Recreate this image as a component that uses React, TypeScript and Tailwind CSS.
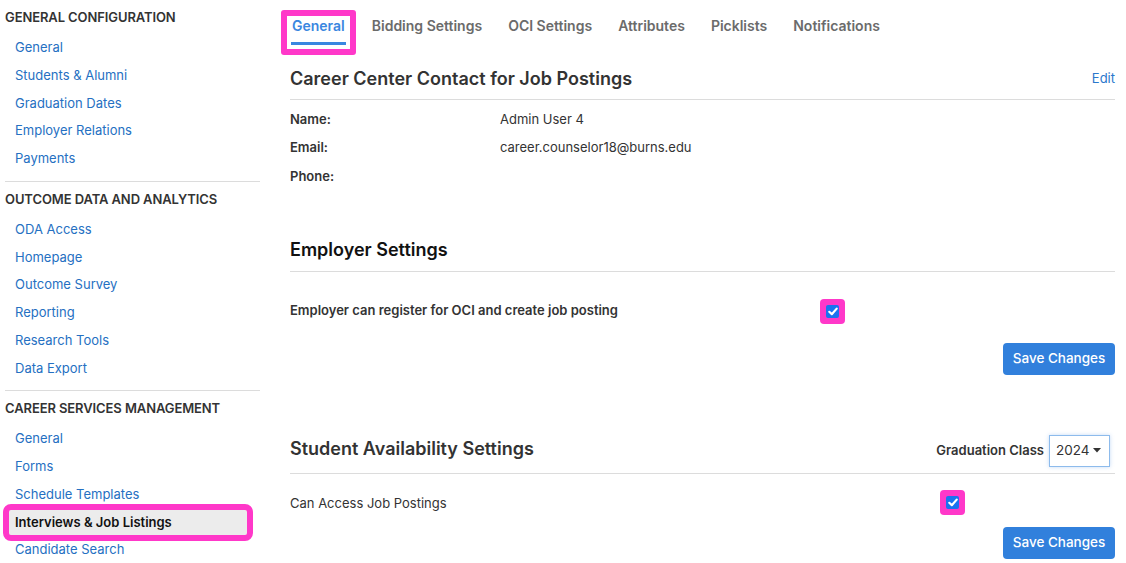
import React from "react";

const font = { fontFamily: "Inter, 'Noto Sans', 'Liberation Sans', sans-serif" };

type Section = { title: string; links: string[]; active?: string };

const sections: Section[] = [
  {
    title: "GENERAL CONFIGURATION",
    links: ["General", "Students & Alumni", "Graduation Dates", "Employer Relations", "Payments"],
  },
  {
    title: "OUTCOME DATA AND ANALYTICS",
    links: ["ODA Access", "Homepage", "Outcome Survey", "Reporting", "Research Tools", "Data Export"],
  },
  {
    title: "CAREER SERVICES MANAGEMENT",
    links: ["General", "Forms", "Schedule Templates", "Interviews & Job Listings", "Candidate Search"],
    active: "Interviews & Job Listings",
  },
];

function Check() {
  return (
    <div className="rounded-[4px] bg-[#ff38c9] p-[6px]">
      <div className="flex h-[13px] w-[13px] items-center justify-center rounded-[2px] bg-[#1a73f0]">
        <svg width="10" height="9" viewBox="0 0 10 9">
          <path d="M1.3 4.8 L3.8 7.2 L8.7 1.6" stroke="white" strokeWidth="2.2" fill="none" strokeLinecap="round" strokeLinejoin="round" />
        </svg>
      </div>
    </div>
  );
}

function SaveButton() {
  return (
    <div className="flex justify-end">
      <button className="h-8 w-[112px] rounded-[4px] bg-[#3180dc] text-[13.5px] font-medium text-white">
        Save Changes
      </button>
    </div>
  );
}

export default function App() {
  return (
    <div className="flex h-[563px] w-[1126px] overflow-hidden bg-white text-[#333]" style={font}>
      {/* Sidebar */}
      <aside className="ml-[5px] w-[255px] shrink-0 pt-[7px]">
        {sections.map((s, i) => (
          <div key={s.title} className={i > 0 ? "mt-[8px] border-t border-[#dcdcdc] pt-[7px]" : ""}>
            <div className="h-5 text-[13px] font-semibold leading-5 tracking-[-0.1px] text-[#333]">{s.title}</div>
            <ul className="mt-[7px]">
              {s.links.map((l) =>
                l === s.active ? (
                  <li key={l} className="flex h-[27.75px] items-center">
                    <div className="ml-[4px] flex h-[25px] w-[238px] items-center rounded-[2px] bg-[#ececec] pl-[6px] text-[13px] font-semibold text-[#111] outline-[6px] outline-[#ff38c9] outline-solid">
                      {l}
                    </div>
                  </li>
                ) : (
                  <li key={l} className="flex h-[27.75px] items-center pl-[10px] text-[13px] text-[#2570c2]">
                    {l}
                  </li>
                )
              )}
            </ul>
          </div>
        ))}
      </aside>

      {/* Main */}
      <main className="ml-[30px] w-[825px] shrink-0">
        {/* Tabs */}
        <nav className="flex gap-[26px] pt-[16px] text-[14px] font-semibold">
          <div className="relative ml-[1px]">
            <div className="absolute -left-[10px] -right-[10px] -top-[6px] h-[45px] rounded-[3px] border-[6px] border-[#ff38c9]" />
            <div className="relative px-[1px] pb-[6px] leading-5 text-[#3a87e0]">General</div>
            <div className="relative h-[3px] w-full bg-[#3a87e0]" />
          </div>
          {["Bidding Settings", "OCI Settings", "Attributes", "Picklists", "Notifications"].map((t) => (
            <div key={t} className="leading-5 text-[#6b6b6b]">
              {t}
            </div>
          ))}
        </nav>

        {/* Contact */}
        <div className="mt-[22px] flex items-center justify-between border-b border-[#dcdcdc] pb-[8px]">
          <h2 className="text-[18px] font-semibold leading-6 text-[#333]">Career Center Contact for Job Postings</h2>
          <a className="text-[13px] text-[#2a78cc]">Edit</a>
        </div>
        <div className="mt-[5px] text-[13px]">
          {[
            ["Name:", "Admin User 4"],
            ["Email:", "career.counselor18@burns.edu"],
            ["Phone:", ""],
          ].map(([k, v]) => (
            <div key={k} className="flex h-[28.5px] items-center">
              <div className="w-[210px] font-semibold text-[#333]">{k}</div>
              <div className="text-[#333]">{v}</div>
            </div>
          ))}
        </div>

        {/* Employer settings */}
        <div className="mt-[47px] border-b border-[#dcdcdc] pb-[9px]">
          <h2 className="text-[18px] font-semibold leading-6 text-[#111]">Employer Settings</h2>
        </div>
        <div className="mt-[27px] flex items-center">
          <div className="w-[530px] text-[13px] font-semibold text-[#333]">
            Employer can register for OCI and create job posting
          </div>
          <Check />
        </div>
        <div className="mt-[19px]">
          <SaveButton />
        </div>

        {/* Student availability */}
        <div className="mt-[60px] flex items-center justify-between border-b border-[#dcdcdc] pb-[6px]">
          <h2 className="-mt-[4px] text-[18px] font-semibold leading-6 text-[#333]">Student Availability Settings</h2>
          <div className="mr-[5px] flex items-center gap-[5px]">
            <span className="text-[13px] font-semibold text-[#333]">Graduation Class</span>
            <div className="flex h-8 w-[61px] items-center justify-between border border-[#8dbbec] pl-[6px] pr-[8px] text-[13.5px] text-[#333] shadow-[0_0_4px_rgba(90,150,230,0.35)]">
              <span>2024</span>
              <svg width="8" height="5" viewBox="0 0 8 5">
                <path d="M0 0 H8 L4 4.5 Z" fill="#333" />
              </svg>
            </div>
          </div>
        </div>
        <div className="mt-[16px] flex items-center">
          <div className="w-[650px] pt-[3px] text-[13px] text-[#333]">Can Access Job Postings</div>
          <Check />
        </div>
        <div className="mt-[12px]">
          <SaveButton />
        </div>
      </main>
    </div>
  );
}
